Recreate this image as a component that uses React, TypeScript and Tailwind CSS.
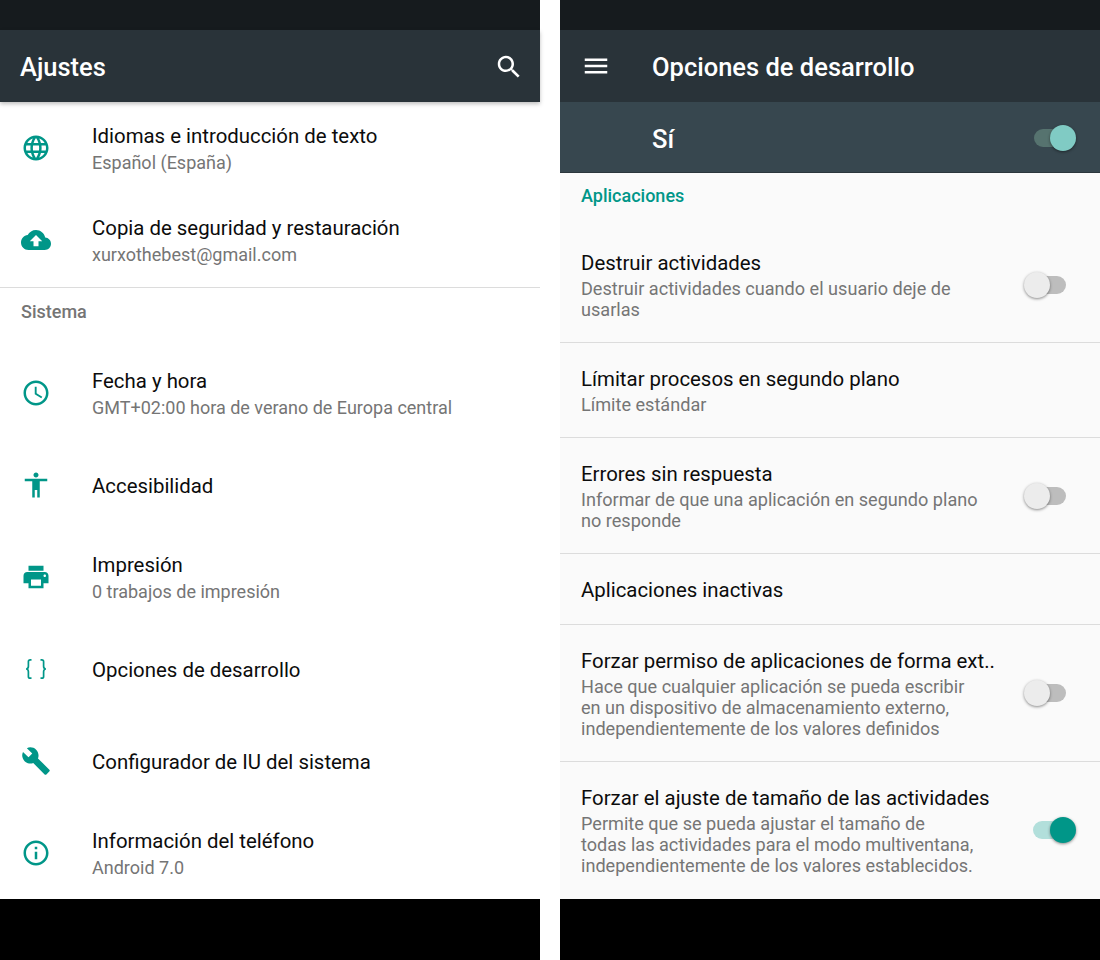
import React from "react";

const paths = {
  language:
    "M11.99 2C6.47 2 2 6.48 2 12s4.47 10 9.99 10C17.52 22 22 17.52 22 12S17.52 2 11.99 2zm6.93 6h-2.95c-.32-1.25-.78-2.45-1.38-3.56 1.84.63 3.37 1.91 4.33 3.56zM12 4.04c.83 1.2 1.48 2.53 1.91 3.96h-3.82c.43-1.43 1.08-2.76 1.91-3.96zM4.26 14C4.1 13.36 4 12.69 4 12s.1-1.36.26-2h3.38c-.08.66-.14 1.32-.14 2 0 .68.06 1.34.14 2H4.26zm.82 2h2.95c.32 1.25.78 2.45 1.38 3.56-1.84-.63-3.37-1.9-4.33-3.56zm2.95-8H5.08c.96-1.66 2.49-2.93 4.33-3.56C8.81 5.55 8.35 6.75 8.03 8zM12 19.96c-.83-1.2-1.48-2.53-1.91-3.96h3.82c-.43 1.43-1.08 2.76-1.91 3.96zM14.34 14H9.66c-.09-.66-.16-1.32-.16-2 0-.68.07-1.35.16-2h4.68c.09.65.16 1.32.16 2 0 .68-.07 1.34-.16 2zm.25 5.56c.6-1.11 1.06-2.31 1.38-3.56h2.95c-.96 1.65-2.49 2.93-4.33 3.56zM16.36 14c.08-.66.14-1.32.14-2 0-.68-.06-1.34-.14-2h3.38c.16.64.26 1.31.26 2s-.1 1.36-.26 2h-3.38z",
  cloud:
    "M19.35 10.04C18.67 6.59 15.64 4 12 4 9.11 4 6.6 5.64 5.35 8.04 2.34 8.36 0 10.91 0 14c0 3.31 2.69 6 6 6h13c2.76 0 5-2.24 5-5 0-2.64-2.05-4.78-4.65-4.96zM14 13v4h-4v-4H7l5-5 5 5h-3z",
  clock:
    "M11.99 2C6.47 2 2 6.48 2 12s4.47 10 9.99 10C17.52 22 22 17.52 22 12S17.52 2 11.99 2zM12 20c-4.42 0-8-3.58-8-8s3.58-8 8-8 8 3.58 8 8-3.58 8-8 8zm.5-13H11v6l5.25 3.15.75-1.23-4.5-2.67z",
  accessibility:
    "M12 2c1.1 0 2 .9 2 2s-.9 2-2 2-2-.9-2-2 .9-2 2-2zm9 7h-6v13h-2v-6h-2v6H9V9H3V7h18v2z",
  print:
    "M19 8H5c-1.66 0-3 1.34-3 3v6h4v4h12v-4h4v-6c0-1.66-1.34-3-3-3zm-3 11H8v-5h8v5zm3-7c-.55 0-1-.45-1-1s.45-1 1-1 1 .45 1 1-.45 1-1 1zm-1-9H6v4h12V3z",
  build:
    "M22.7 19l-9.1-9.1c.9-2.3.4-5-1.5-6.9-2-2-5-2.4-7.4-1.3L9 6 6 9 1.6 4.7C.4 7.1.9 10.1 2.9 12.1c1.9 1.9 4.6 2.4 6.9 1.5l9.1 9.1c.4.4 1 .4 1.4 0l2.3-2.3c.5-.4.5-1.1.1-1.4z",
  info: "M11 17h2v-6h-2v6zm1-15C6.48 2 2 6.48 2 12s4.48 10 10 10 10-4.48 10-10S17.52 2 12 2zm0 18c-4.41 0-8-3.59-8-8s3.59-8 8-8 8 3.59 8 8-3.59 8-8 8zM11 9h2V7h-2v2z",
  search:
    "M15.5 14h-.79l-.28-.27C15.41 12.59 16 11.11 16 9.5 16 5.91 13.09 3 9.5 3S3 5.91 3 9.5 5.91 16 9.5 16c1.61 0 3.09-.59 4.23-1.57l.27.28v.79l5 4.99L20.49 19l-4.99-5zm-6 0C7.01 14 5 11.99 5 9.5S7.01 5 9.5 5 14 7.01 14 9.5 11.99 14 9.5 14z",
  menu: "M3 18h18v-2H3v2zm0-5h18v-2H3v2zm0-7v2h18V6H3z",
};

function Icon({ d, className = "text-[#009688]" }: { d: string; className?: string }) {
  return (
    <svg viewBox="0 0 24 24" className={`h-[30px] w-[30px] shrink-0 fill-current ${className}`}>
      <path d={d} />
    </svg>
  );
}

function BracesIcon() {
  return (
    <svg viewBox="0 0 30 30" className="h-[30px] w-[30px] shrink-0 fill-none stroke-[#009688] stroke-[1.7]">
      <path d="M10.5 5.8H9.2C8 5.8 7.4 6.5 7.4 7.6v4.6c0 1.2-.7 2.6-2.2 2.8 1.5.2 2.2 1.6 2.2 2.8v4.6c0 1.1.6 1.8 1.8 1.8h1.3" />
      <path d="M19.5 5.8h1.3c1.2 0 1.8.7 1.8 1.8v4.6c0 1.2.7 2.6 2.2 2.8-1.5.2-2.2 1.6-2.2 2.8v4.6c0 1.1-.6 1.8-1.8 1.8h-1.3" />
    </svg>
  );
}

function StatusBar() {
  return <div className="h-[30px] shrink-0 bg-[#161b1e]" />;
}

function SettingRow({ icon, title, sub }: { icon: React.ReactNode; title: string; sub?: string }) {
  return (
    <div className="flex h-[92px] items-center pl-[21px]">
      <div className="mb-[3px] flex">{icon}</div>
      <div className="ml-[41px]">
        <div className="text-[20.4px] leading-[26px] text-[#0c0c0c]">{title}</div>
        {sub && <div className="mt-[1px] -mb-[1px] text-[18px] leading-[26px] text-[#757575]">{sub}</div>}
      </div>
    </div>
  );
}

function Toggle({ on, dark }: { on?: boolean; dark?: boolean }) {
  const track = on ? (dark ? "left-[10px] bg-[#56736f]" : "left-[9px] bg-[#b2dfdb]") : "left-[1px] bg-[#bdbdbd]";
  const thumb = on
    ? dark
      ? "right-0 bg-[#80cbc4]"
      : "right-0 bg-[#009688]"
    : "left-0 bg-[#ececec]";
  return (
    <div className="relative mr-[24px] h-[26px] w-[52px] shrink-0">
      <div className={`absolute top-[4px] h-[18px] w-[41px] rounded-full ${track}`} />
      <div className={`absolute top-0 h-[26px] w-[26px] rounded-full shadow-[0_1px_3px_rgba(0,0,0,0.45)] ${thumb}`} />
    </div>
  );
}

function DevRow({ title, sub, toggle }: { title: string; sub?: React.ReactNode; toggle?: "on" | "off" }) {
  return (
    <div className="flex items-center border-b border-[#dcdcdc] pl-[21px] last:border-b-0">
      <div className="min-w-0 flex-1 pt-[23px] pb-[21px]">
        <div className="text-[20.4px] leading-[26px] text-[#0c0c0c]">{title}</div>
        {sub && <div className="mt-[2px] mb-[1px] text-[18.1px] leading-[21px] text-[#757575]">{sub}</div>}
      </div>
      {toggle && <Toggle on={toggle === "on"} />}
    </div>
  );
}

export default function App() {
  return (
    <div className="flex h-[960px] w-[1100px] justify-between overflow-hidden bg-white font-['Roboto',sans-serif]">
      <section className="flex h-[960px] w-[540px] flex-col">
        <StatusBar />
        <header className="relative z-10 flex h-[72px] shrink-0 items-center justify-between bg-[#293339] pr-[16px] pl-[20px] shadow-[0_2px_4px_rgba(0,0,0,0.25)]">
          <h1 className="pt-[3px] text-[25.5px] font-medium text-white">Ajustes</h1>
          <div className="flex pt-[2px]">
            <Icon d={paths.search} className="text-white" />
          </div>
        </header>
        <main className="min-h-0 flex-1 overflow-hidden pt-[1px]">
          <SettingRow icon={<Icon d={paths.language} />} title="Idiomas e introducción de texto" sub="Español (España)" />
          <SettingRow icon={<Icon d={paths.cloud} />} title="Copia de seguridad y restauración" sub="xurxothebest@gmail.com" />
          <div className="h-[61px] border-t border-[#dcdcdc] pt-[14px] pl-[21px] text-[18px] leading-[20px] font-medium text-[#757575]">
            Sistema
          </div>
          <SettingRow icon={<Icon d={paths.clock} />} title="Fecha y hora" sub="GMT+02:00 hora de verano de Europa central" />
          <SettingRow icon={<Icon d={paths.accessibility} />} title="Accesibilidad" />
          <SettingRow icon={<Icon d={paths.print} />} title="Impresión" sub="0 trabajos de impresión" />
          <SettingRow icon={<BracesIcon />} title="Opciones de desarrollo" />
          <SettingRow icon={<Icon d={paths.build} />} title="Configurador de IU del sistema" />
          <SettingRow icon={<Icon d={paths.info} />} title="Información del teléfono" sub="Android 7.0" />
        </main>
        <div className="h-[61px] shrink-0 bg-black" />
      </section>

      <section className="flex h-[960px] w-[540px] flex-col">
        <StatusBar />
        <header className="flex h-[72px] shrink-0 items-center bg-[#293339] pl-[21px]">
          <Icon d={paths.menu} className="text-white" />
          <h1 className="ml-[41px] pt-[3px] text-[25.5px] font-medium text-white">Opciones de desarrollo</h1>
        </header>
        <div className="flex h-[71px] shrink-0 items-center justify-between border-b border-[#2b363c] bg-[#37474f] pl-[92px]">
          <span className="pt-[5px] text-[25.5px] font-medium text-white">Sí</span>
          <div className="flex pt-[1px]">
            <Toggle on dark />
          </div>
        </div>
        <main className="min-h-0 flex-1 overflow-hidden bg-[#fafafa]">
          <div className="h-[54px] pt-[12px] pl-[21px] text-[18px] leading-[22px] font-medium text-[#009688]">
            Aplicaciones
          </div>
          <DevRow
            title="Destruir actividades"
            sub={<>Destruir actividades cuando el usuario deje de<br />usarlas</>}
            toggle="off"
          />
          <DevRow title="Límitar procesos en segundo plano" sub="Límite estándar" />
          <DevRow
            title="Errores sin respuesta"
            sub={<>Informar de que una aplicación en segundo plano<br />no responde</>}
            toggle="off"
          />
          <DevRow title="Aplicaciones inactivas" />
          <DevRow
            title="Forzar permiso de aplicaciones de forma ext.."
            sub={<>Hace que cualquier aplicación se pueda escribir<br />en un dispositivo de almacenamiento externo,<br />independientemente de los valores definidos</>}
            toggle="off"
          />
          <DevRow
            title="Forzar el ajuste de tamaño de las actividades"
            sub={<>Permite que se pueda ajustar el tamaño de<br />todas las actividades para el modo multiventana,<br />independientemente de los valores establecidos.</>}
            toggle="on"
          />
        </main>
        <div className="h-[61px] shrink-0 bg-black" />
      </section>
    </div>
  );
}
